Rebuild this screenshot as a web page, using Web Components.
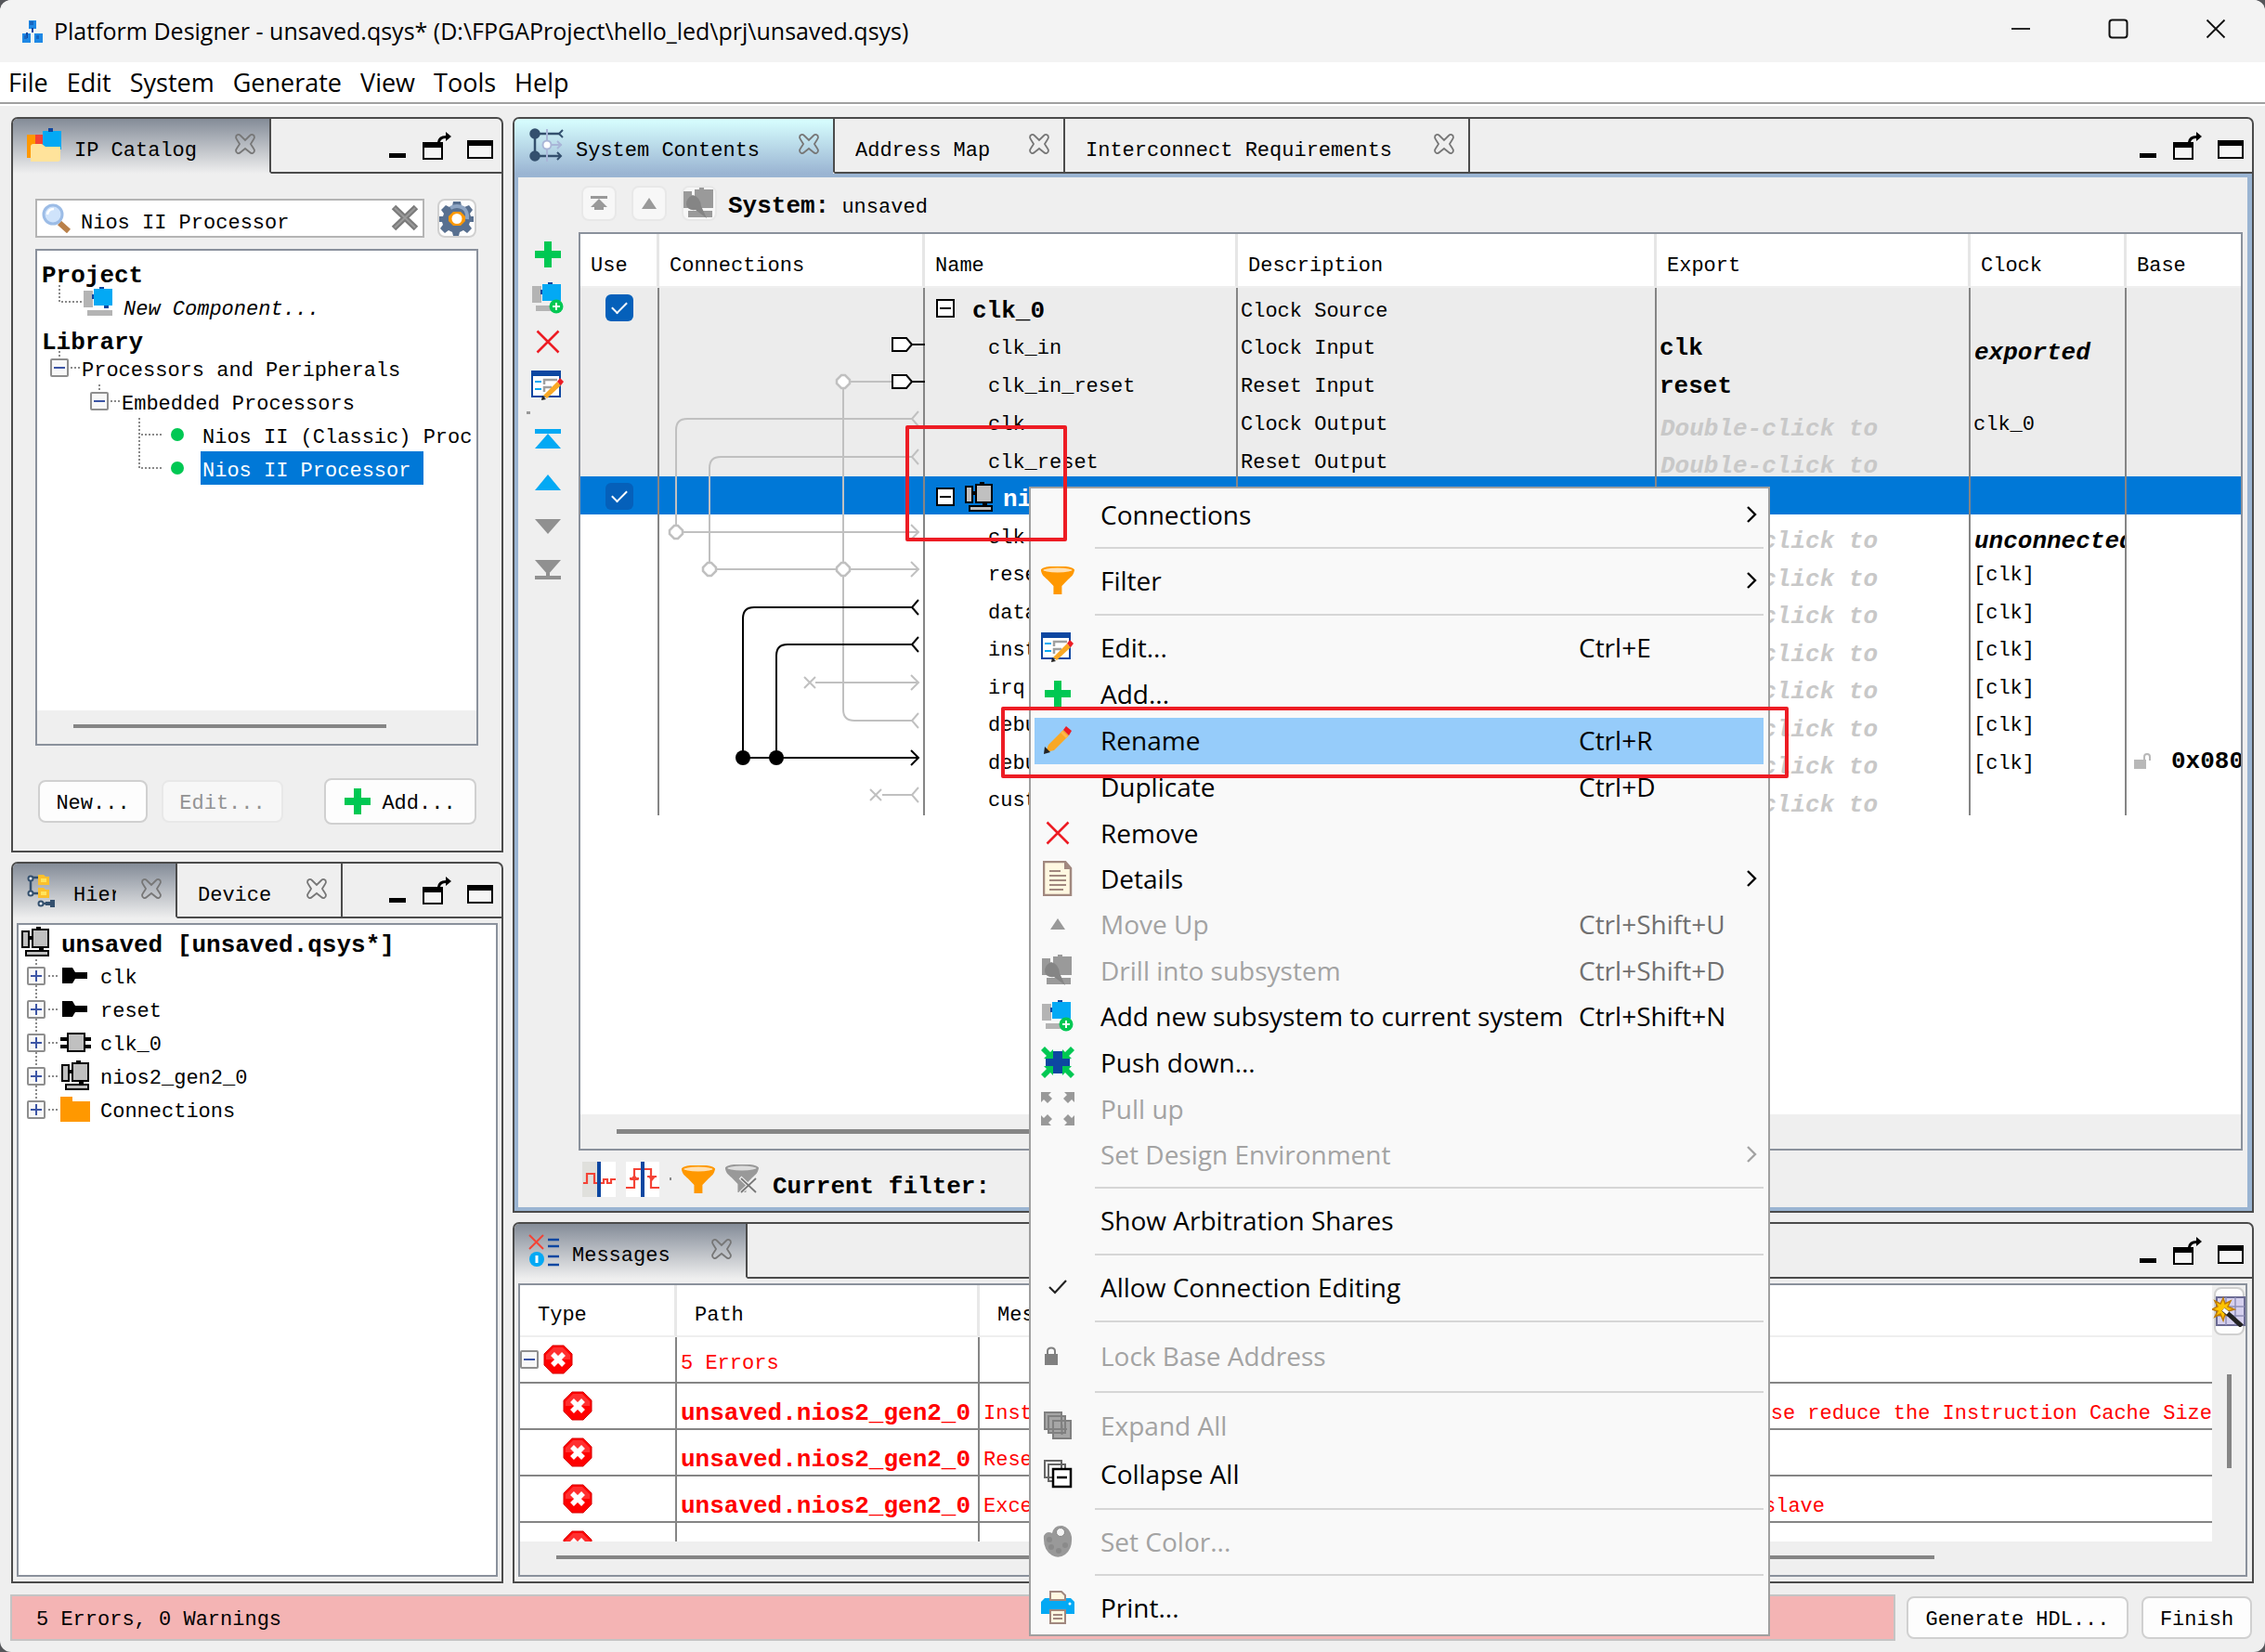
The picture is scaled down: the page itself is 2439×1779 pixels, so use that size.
<!DOCTYPE html>
<html lang="en">
<head>
<meta charset="utf-8">
<title>Platform Designer</title>
<style>
  html, body { margin: 0; height: 100%; }
  body {
    background: #55565a; overflow: hidden; color: #000;
    --mono: "Liberation Mono", "DejaVu Sans Mono", monospace;
    --ui: "Open Sans", "Noto Sans", sans-serif;
    --line: #4b4b4b; --frame: #8a919c; --face: #efefef; --sel: #0078d7;
    font: 22px/28px var(--mono);
  }
  .window { position: relative; height: 100vh; display: flex; flex-direction: column; background: var(--face); border-radius: 12px; overflow: hidden; }
  main { flex: 1; min-height: 0; display: flex; gap: 10px; padding: 12px; }
  .col { display: flex; flex-direction: column; gap: 10px; min-width: 0; }
  .left { flex: 0 0 530px; }
  .right { flex: 1; }
  .catalog { flex: 0 0 792px; }
  .messages { flex: 0 0 389px; }
  .grow { flex: 1; min-height: 0; }
  qs-context-menu { position: absolute; left: 1108px; top: 524px; }
  .mark { position: absolute; box-sizing: border-box; border: 4px solid #ed1c24; border-radius: 2px; pointer-events: none; }
  .mark-node { left: 975px; top: 458px; width: 174px; height: 125px; }
  .mark-rename { left: 1078px; top: 761px; width: 848px; height: 77px; }
</style>
</head>
<body>
<div class="window">
  <qs-title-bar>Platform Designer - unsaved.qsys* (D:\FPGAProject\hello_led\prj\unsaved.qsys)</qs-title-bar>
  <qs-menu-bar></qs-menu-bar>
  <main>
    <div class="col left">
      <qs-panel class="catalog">
        <qs-tab slot="tabs" active icon="catalog" style="--w:278px">IP Catalog</qs-tab>
        <qs-catalog></qs-catalog>
      </qs-panel>
      <qs-panel class="grow">
        <qs-tab slot="tabs" active icon="hier" style="--w:177px;--tw:46px">Hierarchy</qs-tab>
        <qs-tab slot="tabs" style="--w:178px">Device</qs-tab>
        <qs-hierarchy></qs-hierarchy>
      </qs-panel>
    </div>
    <div class="col right">
      <qs-panel class="grow" focused>
        <qs-tab slot="tabs" active focused icon="system" style="--w:345px">System Contents</qs-tab>
        <qs-tab slot="tabs" style="--w:248px">Address Map</qs-tab>
        <qs-tab slot="tabs" style="--w:436px">Interconnect Requirements</qs-tab>
        <qs-system></qs-system>
      </qs-panel>
      <qs-panel class="messages">
        <qs-tab slot="tabs" active icon="messages" style="--w:251px">Messages</qs-tab>
        <qs-messages></qs-messages>
      </qs-panel>
    </div>
  </main>
  <qs-status-bar>5 Errors, 0 Warnings</qs-status-bar>
  <qs-context-menu></qs-context-menu>
  <div class="mark mark-node"></div>
  <div class="mark mark-rename"></div>
</div>

<script>
const define = (name, css, html) => {
  const t = document.createElement('template');
  customElements.define(name, class extends HTMLElement {
    connectedCallback() {
      if (this.shadowRoot) return;
      t.innerHTML = `<style>:host,*{box-sizing:border-box}button,input{font:inherit;color:inherit;margin:0}${css}</style>` +
        (typeof html === 'function' ? html(this) : html);
      this.attachShadow({ mode: 'open' }).append(t.content.cloneNode(true));
    }
  });
};

/* ---------- icons ---------- */
const computer = (line, side, main) =>
  `<g stroke="${line}" stroke-width="2"><path d="M17 0h5v4h-5zM8 10h6v4h-6zM20 22h5v5h-5z" fill="${line}" stroke="none"/><rect x="2" y="5" width="7" height="17" fill="${side}"/><rect x="13" y="3" width="17" height="19" fill="${main}"/><rect x="6" y="26" width="24" height="5" fill="${side}"/></g>`;
const blueComputer = '<path d="M0 4h10v18H0zM4 25h27v6H4z" fill="#b4b4b4"/><path d="M9 8h5v5H9zM17 0h5v4h-5zM22 20h5v3h-5z" fill="#0d47a1"/><path d="M11 2h20v18H11z" fill="#03a9f4"/>';
const funnel = (c, hi) => `<path d="M0 3h32c0 6-3 8-6 11l-6 7v9h-8v-9L6 14C3 11 0 9 0 3z" fill="${c}"/><ellipse cx="16" cy="4" rx="15" ry="3.5" fill="${hi}" stroke="${c}" stroke-width="2"/>`;
const pencil = '<path d="M3 29l3-8L22 5l6 6L12 27z" fill="#f9a825"/><path d="M22 5l3-4 6 5-3 5z" fill="#ed1c24"/><path d="M21 6l6 6-2 2-6-6z" fill="#ffb74d"/><path d="M1 31l1-8 6 6z" fill="#222"/>';
const edit = '<path d="M0 1h32v29H0z" fill="#0d47a1"/><path d="M2 7h28v21H2z" fill="#fff"/><path d="M4 12h7v2H4zM4 20h7v2H4z" fill="#03a9f4"/><path d="M14 16v-5h14M14 24v-5h8" fill="none" stroke="#a0a0a0" stroke-width="2.5"/><path d="M13 28L28 13l4 4-15 14z" fill="#f9a825"/><path d="M28 13l3-4 4 4-3 4z" fill="#ed1c24"/><path d="M11 33l1-5 4 4z" fill="#222"/>';
const arrow = (x, y, r) => `<path transform="translate(${x} ${y}) rotate(${r})" d="M0 0h11l-3 3 4 4-5 5-4-4-3 3z"/>`;
const err = '<path d="M10 1h12l9 9v12l-9 9H10l-9-9V10z" fill="#f00" stroke="#d80000"/><path d="M11 3h10l8 8v5H3v-5z" fill="#ff5555" opacity=".55"/><path d="M10 10l12 12M22 10L10 22" stroke="#fff" stroke-width="5.5"/>';
const box = (sign) => `<rect x="1" y="1" width="18" height="18" rx="1" fill="#f8f8f8" stroke="#8e8e8e" stroke-width="2"/><path d="M4 10h12${sign === '+' ? 'M10 4v12' : ''}" stroke="#3c55a5" stroke-width="2"/>`;
const wbox = '<rect x="1" y="1" width="18" height="18" fill="#fff" stroke="#000" stroke-width="2"/><path d="M4 10h12" stroke="#000" stroke-width="2"/>';
const ICONS = {
  logo: [24, 26, '<path d="M8 1h8v9H8zM1 15h9v10H1zM14 15h9v10h-9z" fill="#1e88e5"/><path d="M12 9v5M6 20v-6" stroke="#0d47a1" stroke-width="2"/><path d="M9 2h4v4H9zM3 17h3v4H3zM16 17h3v4h-3z" fill="#1565c0"/>'],
  wmin: [22, 22, '<path d="M1 11h20" stroke="#111" stroke-width="1.8"/>'],
  wmax: [22, 22, '<rect x="1.5" y="1.5" width="19" height="19" rx="3" fill="none" stroke="#111" stroke-width="2"/>'],
  wclose: [22, 22, '<path d="M1.500 1.500l19 19M20.500 1.500l-19 19" stroke="#111" stroke-width="1.800"/>'],
  catalog: [38, 38, '<path d="M0 7h16v25H0z" fill="#ff9800"/><path d="M9 7h8v12H9z" fill="#f44336"/><path d="M17 3h20v20H17z" fill="#03a9f4"/><path d="M23 0h5v4h-5z" fill="#0d47a1"/><path d="M4 36V20q0-3 3-3h9l4 3h16v13q0 3-3 3z" fill="#ffe39b"/>'],
  hier: [32, 36, '<path d="M4 5v16M4 4h8M4 21h8M16 32h8" stroke="#34506e" stroke-width="2.500"/><g fill="#f3f7fb" stroke="#34506e" stroke-width="2"><circle cx="4" cy="5" r="2.500"/><circle cx="4" cy="21" r="2.500"/><circle cx="15" cy="32" r="2.500"/></g><path d="M12 1h6l2 2h4v9H12zM12 15h6l2 2h4v9H12z" fill="#fbc02d"/><path d="M15 5h6v4h-6zM15 19h6v4h-6z" fill="#ffe45c"/><path d="M20 30h5v-2h5v8h-5v-2h-5z" fill="#34506e"/>'],
  system: [38, 38, '<g stroke="#34506e" stroke-width="2.500" fill="#34506e"><path d="M7 6v24M7 6h27M7 30h27" fill="none"/><circle cx="7" cy="6" r="4.500"/><circle cx="7" cy="30" r="4.500"/><path d="M37 2l-4 4 4 4M31 26l4 4-4 4" fill="none" stroke-width="2"/></g><path d="M20 1v35M20 18h16M31 14l4 4-4 4" stroke="#a9b6d8" stroke-width="2" fill="none"/><circle cx="20" cy="18" r="4.500" fill="#fff" stroke="#a9b6d8" stroke-width="2"/>'],
  messages: [34, 36, '<path d="M1 1l15 15M16 1L1 16" stroke="#f44336" stroke-width="2"/><circle cx="9" cy="27" r="8" fill="#03a9f4"/><path d="M9 23v8" stroke="#fff" stroke-width="3"/><path d="M21 6h12M21 13h12M21 24h12M21 33h12" stroke="#0d47a1" stroke-width="2.500"/>'],
  close: [24, 24, '<path d="M2 5c0-3 3-4 5-2l5 5 5-5c2-2 5-1 5 2 0 1-1 2-4 7 3 5 4 6 4 7 0 3-3 4-5 2l-5-4-5 4c-2 2-5 1-5-2 0-1 1-2 4-7C3 7 2 6 2 5z" fill="none" stroke="#777" stroke-width="1.800"/>'],
  pmin: [20, 24, '<path d="M1 17h18v5H1z"/>'],
  pfloat: [32, 30, '<path d="M2 12h20v17H2z" fill="#f5f5f5" stroke="#000" stroke-width="2"/><path d="M1 11h22v6H1zM17 11q1-7 9-7V0l6 5-6 5V7q-5 0-6 4z"/>'],
  pmax: [30, 22, '<path d="M2 2h26v18H2z" fill="#f5f5f5" stroke="#000" stroke-width="2"/><path d="M1 1h28v6H1z"/>'],
  search: [32, 32, '<path d="M19 21l10 9" stroke="#b9804a" stroke-width="6"/><circle cx="12" cy="12" r="10" fill="#cfe3fb" stroke="#9cbce6" stroke-width="3"/><path d="M6 12q1-6 7-6" stroke="#fff" stroke-width="2.500" fill="none"/>'],
  clear: [32, 30, '<path d="M4 3l24 23M28 3L4 26" stroke="#7b7b7b" stroke-width="6.500"/><path d="M5 4l22 21M27 4L5 25" stroke="#9a9a9a" stroke-width="2"/>'],
  gear: [38, 38, '<path d="M15 1h8l1 5 3 1 5-2 4 5-3 4 1 3h3v6h-4l-1 3 3 4-5 5-4-3-4 2-1 4h-6l-1-4-4-2-4 3-5-5 3-4-1-3H0v-6h4l1-3-3-4 5-5 4 2 3-1z" fill="#587090"/><path d="M12 8q7-4 14 0 5 4 4 12" stroke="#8ea5c3" stroke-width="4" fill="none"/><path d="M15 12h8l5 5v5l-5 5h-8l-5-5v-5z" fill="#ff9800"/><circle cx="19" cy="19.500" r="5.500" fill="#fff"/>'],
  plus: [28, 28, '<path d="M10 0h8v10h10v8H18v10h-8V18H0v-8h10z" fill="#00c853"/>'],
  newsub: [34, 34, blueComputer + '<circle cx="26" cy="26" r="7.500" fill="#00c853"/><path d="M26 22v8M22 26h8" stroke="#fff" stroke-width="2"/>'],
  bluecomp: [32, 32, blueComputer],
  drill: [34, 34, '<path d="M0 4h9v18H0zM12 2h20v20H12zM17 0h5v3h-5zM5 25h26v7H5z" fill="#9a9a9a"/><path d="M10 8q8 2 9 12l6 13-12-9Q4 25 3 18q0-7 7-10z" fill="#858585"/>'],
  remove: [26, 26, '<path d="M1.500 1.500l23 23M24.500 1.500l-23 23" stroke="#ed1c24" stroke-width="2.500"/>'],
  edit: [36, 34, edit],
  rename: [32, 32, pencil],
  top: [28, 22, '<path d="M0 0h28v5H0zM14 5l14 16H0z" fill="#03a9f4"/>'],
  up: [28, 17, '<path d="M14 0l14 17H0z" fill="#03a9f4"/>'],
  down: [28, 16, '<path d="M0 0h28L14 16z" fill="#909090"/>'],
  bottom: [28, 22, '<path d="M0 0h28L14 16zM0 17h28v4H0z" fill="#909090"/><path d="M12 14h4v4h-4z" fill="#909090"/>'],
  gtop: [18, 16, '<path d="M0 0h18v3H0zM9 3l9 9H0zM4 10h10v5H4z" fill="#999"/>'],
  gup: [16, 12, '<path d="M8 0l8 12H0z" fill="#999"/>'],
  wave1: [36, 38, '<path d="M0 0h18v38H0z" fill="#e0e0dc"/><path d="M18 0h18v38H18z" fill="#fff"/><path d="M1 23h4V13h8v10h10v-4h4v4h4v-4h5" fill="none" stroke="#f44336" stroke-width="2.200"/><path d="M16 0h4v38h-4z" fill="#0d47a1"/>'],
  wave2: [36, 38, '<path d="M0 0h36v38H0z" fill="#fff"/><path d="M0 28h9V8h18v20h9M4 18h10M23 16h10" fill="none" stroke="#f44336" stroke-width="2.200"/><path d="M9 14l5 6H4zM28 21l5-6H23z" fill="#f44336"/><path d="M16 0h4v38h-4z" fill="#0d47a1"/>'],
  funnel: [36, 30, `<g transform="scale(1.120 1)">${funnel('#ff9800', '#ffe0b2')}</g>`],
  gfunnel: [36, 32, `<g transform="scale(1.120 1)">${funnel('#999', '#ddd')}</g><path d="M16 14l18 17M34 14L16 31" stroke="#efefef" stroke-width="4"/><path d="M17 15l16 15M33 15L17 30" stroke="#777" stroke-width="1.800"/>`],
  details: [32, 38, '<path d="M1 1h23l6 7v29H1z" fill="#fff8e1" stroke="#a1887f" stroke-width="2.500"/><path d="M23 1v8h7" fill="#a1887f"/><path d="M7 11h12M7 16h18M7 21h18M7 26h18M7 31h15" stroke="#a1887f" stroke-width="2"/>'],
  push: [36, 34, `<path d="M13 5h10v7h8v10h-8v7H13v-7H5V12h8z" fill="#0d47a1"/><g fill="#00c853"><path d="M13 13H3l3-3-6-6 4-4 6 6 3-3zM23 13h10l-3-3 6-6-4-4-6 6-3-3zM13 21H3l3 3-6 6 4 4 6-6 3 3zM23 21h10l-3 3 6 6-4 4-6-6-3 3z"/></g>`],
  pull: [36, 36, `<g fill="#999">${arrow(0, 0, 0)}${arrow(36, 0, 90)}${arrow(36, 36, 180)}${arrow(0, 36, 270)}</g>`],
  check: [20, 18, '<path d="M1 9l6 6L19 2" fill="none" stroke="#222" stroke-width="2.200"/>'],
  lock: [28, 20, '<path d="M0 8h14v12H0z" fill="#808080"/><path d="M3 9V5q0-3.500 4-3.500T11 5v4" fill="none" stroke="#808080" stroke-width="2"/>'],
  unlock: [20, 18, '<path d="M0 7h13v10H0z" fill="#b8b8b8"/><path d="M11 8V4q0-3 3-3t3 3v4" fill="none" stroke="#b8b8b8" stroke-width="2"/>'],
  expand: [32, 32, '<g fill="#a6a6a6" stroke="#808080" stroke-width="2"><path d="M2 2h18v18H2zM6 6h18v18H6zM11 11h19v19H11z"/><path d="M15 20h11M20.500 15v11"/></g>'],
  collapse: [32, 32, '<g fill="#fff" stroke="#666" stroke-width="2"><path d="M2 2h18v18H2zM6 6h18v18H6z"/><path d="M11 11h19v19H11zM15 20h11" stroke="#000" stroke-width="2.500"/></g>'],
  palette: [34, 36, '<path d="M2 12q3-6 9-3Q13 0 22 1q8 2 10 12 1 13-7 19-7 5-14 1Q1 27 2 12z" fill="#999"/><circle cx="20" cy="8" r="4.500" fill="#f4f4f4" stroke="#888"/><g fill="#8a8a8a"><circle cx="8" cy="16" r="3"/><circle cx="10" cy="24" r="3"/><circle cx="18" cy="28" r="3"/><circle cx="25" cy="22" r="3"/></g>'],
  print: [36, 36, '<path d="M4 8h28l4 4v13H0V12z" fill="#03a9f4"/><path d="M10 1h12l4 4v5H10zM10 21h16v14H10z" fill="#fff8e1" stroke="#a1887f" stroke-width="2"/><path d="M13 26h10M13 30h10" stroke="#a1887f" stroke-width="2"/><circle cx="31" cy="14" r="1.500" fill="#fff"/>'],
  chev: [12, 20, '<path d="M1 2l8 8-8 8" fill="none" stroke="currentColor" stroke-width="2.400"/>'],
  err: [32, 32, err],
  minus: [20, 20, box('-')],
  wbox: [20, 20, wbox],
  comp: [32, 33, computer('#000', '#c0c0c0', '#c0c0c0')],
  wizard: [36, 34, '<path d="M5 2h30v30H5z" fill="#d5d0ee" stroke="#6a6a92" stroke-width="2"/><path d="M15 2v30M25 2v30M5 12h30M5 22h30" stroke="#8f8fb8" stroke-width="1.500"/><path d="M12 3l2 6 6-3-3 6 7 3-7 2 3 6-6-3-2 7-3-7-6 3 3-6-6-2 6-3-3-6 6 3z" fill="#ffc400" stroke="#c07c00" stroke-width="1.500"/><path d="M12 15l20 18" stroke="#222" stroke-width="5"/><path d="M12 15l5 4" stroke="#fff" stroke-width="4"/>']
};
define('qs-icon', ':host{display:inline-flex;flex:none}svg{display:block}', el => {
  const [w, h, body] = ICONS[el.getAttribute('name')];
  return `<svg width="${w}" height="${h}" viewBox="0 0 ${w} ${h}" aria-hidden="true">${body}</svg>`;
});
const icon = n => `<qs-icon name="${n}"></qs-icon>`;

/* ---------- window chrome ---------- */
define('qs-title-bar', `
  :host{display:flex;align-items:center;height:67px;flex:none;background:#f3f3f3;padding:0 42px 0 23px;gap:11px;font:25px/34px var(--ui)}
  .t{flex:1;white-space:nowrap;padding-bottom:1px}
  .b{display:flex;gap:83px;padding-bottom:5px}
  button{border:0;background:none;padding:0;display:flex}`,
  `${icon('logo')}<span class="t"><slot></slot></span><span class="b"><button aria-label="Minimize">${icon('wmin')}</button><button aria-label="Maximize">${icon('wmax')}</button><button aria-label="Close">${icon('wclose')}</button></span>`);

define('qs-menu-bar', `
  :host{display:block;flex:none;background:#fff;font:27px/43px var(--ui);border-bottom:2px solid #fff}
  nav{display:flex;gap:20px;padding:0 9px;height:45px;border-bottom:2px solid #a0a0a0}
  button{border:0;background:none;padding:0}`,
  `<nav>${['File', 'Edit', 'System', 'Generate', 'View', 'Tools', 'Help'].map(m => `<button>${m}</button>`).join('')}</nav>`);

define('qs-panel', `
  :host{display:flex;flex-direction:column;border:2px solid var(--line);border-radius:7px 7px 0 0;background:var(--face);min-height:0;overflow:hidden}
  .strip{display:flex;height:59px;flex:none}
  .rest{flex:1;display:flex;justify-content:flex-end;align-items:flex-end;gap:16px;padding:0 8px 13px 0;border-bottom:2px solid var(--line)}
  .rest button{border:0;background:none;padding:0;display:flex}
  .body{flex:1;min-height:0;display:flex;padding:0 4px 4px}
  .body.f{border:solid #9ab4d2;border-width:4px 5px 4px 4px;padding:0}
  ::slotted(:not([slot])){flex:1;min-width:0}`,
  el => `<div class="strip"><slot name="tabs"></slot><div class="rest"><button aria-label="Minimize panel">${icon('pmin')}</button><button aria-label="Detach panel">${icon('pfloat')}</button><button aria-label="Maximize panel">${icon('pmax')}</button></div></div><div class="body ${el.hasAttribute('focused') ? 'f' : ''}"><slot></slot></div>`);

define('qs-tab', `
  :host{display:flex;align-items:center;width:var(--w);flex:none;border-right:2px solid var(--line);border-bottom:2px solid var(--line);padding:0 14px 0 22px;gap:13px;white-space:nowrap}
  :host([active]){border-bottom-color:transparent;background:linear-gradient(#848c98,#efefef) border-box;padding-left:15px}
  :host([focused]){background:linear-gradient(#d8ffff,#9ab4d2) border-box}
  span{flex:1;overflow:hidden;padding-top:12px;line-height:28px}
  :host([style*="--tw"]) span{flex:0 0 var(--tw);margin-left:5px}
  button{border:0;background:none;padding:0;display:flex;margin-left:auto;padding-bottom:3px}`,
  el => `${el.hasAttribute('icon') ? icon(el.getAttribute('icon')) : ''}<span><slot></slot></span><button aria-label="Close tab">${icon('close')}</button>`);

define('qs-button', `
  :host{display:inline-flex}
  button{display:flex;align-items:center;justify-content:center;gap:12px;width:100%;height:100%;padding:6px 0 0;background:#fdfdfd;border:2px solid #d0d0d0;border-radius:8px;white-space:nowrap}
  button:disabled{background:#f7f7f7;border-color:#e8e8e8;color:#939393}
  qs-icon{margin-top:-6px}`,
  el => `<button ${el.hasAttribute('disabled') ? 'disabled' : ''} ${el.hasAttribute('label') ? `aria-label="${el.getAttribute('label')}"` : ''}>${el.hasAttribute('icon') ? icon(el.getAttribute('icon')) : ''}<slot></slot></button>`);

/* ---------- IP catalog ---------- */
const dots = d => `<path d="${d}" fill="none" stroke="#8a8a8a" stroke-width="2" stroke-dasharray="2 2"/>`;
const guide = (x, w, body) => `<svg width="${w}" height="36" viewBox="${x} 0 ${w} 36" aria-hidden="true">${body}</svg>`;
const at = (x, y, body) => `<g transform="translate(${x} ${y})">${body}</g>`;

define('qs-catalog', `
  :host{display:flex;flex-direction:column;padding:27px 21px 24px 20px}
  .find{display:flex;gap:14px;height:42px;margin-right:2px}
  label{flex:1;display:flex;align-items:center;gap:8px;background:#fff;border:2px solid #b4b4b4;padding:0 3px 0 5px;min-width:0}
  input{flex:1;min-width:0;border:0;outline:0;background:none;padding:10px 0 0 2px;height:38px}
  label button{border:0;background:none;padding:0;display:flex}
  .find>button{width:42px;padding:0;border:2px solid #d0d0d0;border-radius:8px;background:#fdfdfd;display:flex;align-items:center;justify-content:center}
  .box{margin-top:12px;flex:1;min-height:0;display:flex;flex-direction:column;border:2px solid var(--frame);background:#fff;overflow:hidden}
  .tree{flex:1;overflow:hidden}
  .r{display:flex;height:36px;padding-left:5px;align-items:center;white-space:pre}
  .r span{padding-top:8px;line-height:28px}
  .low span{padding-top:20px;line-height:16px}
  b{font-size:26px} svg{flex:none;display:block}
  .sel span{background:var(--sel);color:#fff;padding:8px 14px 0 2px;margin-left:-2px}
  .sb{height:36px;background:var(--face);padding:15px 97px 0 39px}
  .sb i{display:block;height:4px;background:#858585}
  .btns{display:flex;align-items:center;gap:15px;margin:35px 2px 0 3px}
  .btns qs-button{height:46px;width:118px} .btns .e{width:131px} .btns .a{width:164px;height:50px;margin-left:auto}`,
  `<div class="find"><label>${icon('search')}<input aria-label="Search IP" value="Nios II Processor"><button aria-label="Clear">${icon('clear')}</button></label><button aria-label="Settings">${icon('gear')}</button></div>
  <div class="box"><div class="tree">
    <div class="r low"><span><b>Project</b></span></div>
    <div class="r low">${guide(45, 88, dots('M64 1V19H88') + at(90, 3, blueComputer))}<span><i>New Component...</i></span></div>
    <div class="r low"><span><b>Library</b></span></div>
    <div class="r">${guide(45, 43, dots('M64 0V8M76 18H88') + at(54, 8, box('-')))}<span>Processors and Peripherals</span></div>
    <div class="r">${guide(45, 86, dots('M107 0V8M119 18H131') + at(97, 8, box('-')))}<span>Embedded Processors</span></div>
    <div class="r">${guide(45, 173, dots('M150 0V36M152 18H175') + '<circle cx="191" cy="18" r="7" fill="#00c853"/>')}<span>Nios II (Classic) Proc</span></div>
    <div class="r sel">${guide(45, 173, dots('M150 0V18H175') + '<circle cx="191" cy="18" r="7" fill="#00c853"/>')}<span>Nios II Processor</span></div>
  </div><div class="sb"><i></i></div></div>
  <div class="btns"><qs-button>New...</qs-button><qs-button class="e" disabled>Edit...</qs-button><qs-button class="a" icon="plus">Add...</qs-button></div>`);

/* ---------- hierarchy ---------- */
const port = '<path d="M0 0h11l3 5h13v7H14l-3 5H0z" fill="#000"/>';
const chip = '<path d="M0 5h33v4H0zM0 13h33v4H0z" fill="#000"/><rect x="8" y="1" width="18" height="19" fill="#c0c0c0" stroke="#000" stroke-width="2"/>';
const folder = '<path d="M0 0h13v5h19v22H0z" fill="#ff9800"/>';
const hrow = (text, art, last) => `<div class="r">${guide(20, 88, dots(`M39 0V8${last ? '' : 'M39 28V36'}M52 18H64`) + at(29, 8, box('+')) + art)}<span>${text}</span></div>`;
define('qs-hierarchy', `
  :host{display:block;margin:5px 0 1px;border:2px solid var(--frame);background:#fff;padding-top:1px}
  .r{display:flex;height:36px;align-items:center;white-space:pre}
  .r span{padding-top:5px}
  .root span{padding-top:8px}
  b{font-size:26px} svg{flex:none;display:block}`,
  `<div class="r root">${guide(20, 46, at(22, 1, computer('#000', '#c0c0c0', '#c0c0c0')))}<span><b>unsaved [unsaved.qsys*]</b></span></div>` +
  hrow('clk', at(67, 9, port)) + hrow('reset', at(67, 9, port)) + hrow('clk_0', at(65, 7, chip)) +
  hrow('nios2_gen2_0', at(65, 1, computer('#000', '#c0c0c0', '#c0c0c0'))) + hrow('Connections', at(65, 4, folder), true));

/* ---------- system contents ---------- */
const fork = (y, c) => `<path d="M989 ${y - 8}l-7 8 7 8" fill="none" stroke="${c}" stroke-width="2"/>`;
const head = (y, c) => `<path d="M981 ${y - 8}l8 8-8 8" fill="none" stroke="${c}" stroke-width="2"/>`;
const node = (x, y) => `<path d="M${x - 2} ${y - 7}h4l5 5v4l-5 5h-4l-5-5v-4z" fill="#fff" stroke="#c0c0c0" stroke-width="2.500"/>`;
const pin = y => `<path d="M961 ${y - 7}h15l6 7-6 7h-15z" fill="#fff" stroke="#000" stroke-width="2"/><path d="M982 ${y}h14" stroke="#000" stroke-width="2"/>`;
const cross = (x, y) => `<path d="M${x - 6} ${y - 6}l12 12M${x + 6} ${y - 6}l-12 12" stroke="#c0c0c0" stroke-width="2"/>`;
const G = '#c0c0c0', K = '#000';
const wires = `<svg width="286" height="567" viewBox="710 309 286 567" aria-hidden="true">
  <g fill="none" stroke="${G}" stroke-width="2"><path d="M982 450H740q-12 0-12 12V572H989M982 491H776q-12 0-12 12V612H989M961 410H908V763q0 12 12 12H982M878 734H989M950 855H982"/></g>
  <g fill="none" stroke="${K}" stroke-width="2"><path d="M982 653H812q-12 0-12 12V815H989M982 693H848q-12 0-12 12V815"/></g>
  ${fork(450, G)}${fork(491, G)}${head(572, G)}${head(612, G)}${fork(653, K)}${fork(693, K)}${head(734, G)}${fork(775, G)}${head(815, K)}${fork(855, G)}
  ${node(908, 410)}${node(728, 572)}${node(764, 612)}${node(908, 612)}${pin(370)}${pin(410)}${cross(872, 734)}${cross(943, 855)}
  <circle cx="800" cy="815" r="8"/><circle cx="836" cy="815" r="8"/></svg>`;
const dbl = '<td class="low"><b class="hint"><i>Double-click to</i></b></td>';
const child = (name, desc, exp, clock, base) => `<td></td><td></td><td class="kid">${name}</td><td>${desc}</td>${exp}<td ${/<i>/.test(clock) ? 'class="low"' : ''}>${clock}</td><td>${base || ''}</td>`;
const ROWS = [
  ['g', `<td class="use"><input type="checkbox" checked aria-label="Use clk_0"></td><td class="conn">${wires}</td><td class="top"><span>${icon('wbox')}<b class="n0">clk_0</b></span></td><td>Clock Source</td><td></td><td></td><td></td>`],
  ['g', child('clk_in', 'Clock Input', '<td><b>clk</b></td>', '<b><i>exported</i></b>')],
  ['g', child('clk_in_reset', 'Reset Input', '<td><b>reset</b></td>', '')],
  ['g', child('clk', 'Clock Output', dbl, 'clk_0')],
  ['g', child('clk_reset', 'Reset Output', dbl, '')],
  ['s', `<td class="use"><input type="checkbox" checked aria-label="Use nios2_gen2_0"></td><td></td><td class="top"><span>${icon('wbox')}${icon('comp')}<b>nios2_gen2_0</b></span></td><td></td><td></td><td></td><td></td>`],
  ['', child('clk', '', dbl, '<b><i>unconnected</i></b>')],
  ['', child('reset', '', dbl, '[clk]')],
  ['', child('data_master', '', dbl, '[clk]')],
  ['', child('instruction', '', dbl, '[clk]')],
  ['', child('irq', '', dbl, '[clk]')],
  ['', child('debug_reset', '', dbl, '[clk]')],
  ['', child('debug_mem', '', dbl, '[clk]', `<span class="base">${icon('unlock')}<b>0x080</b></span>`)],
  ['', child('custom', '', dbl, '')]
];
define('qs-system', `
  :host{display:flex;flex-direction:column;background:var(--face)}
  .bar{display:flex;align-items:center;gap:16px;height:59px;padding:0 0 3px 68px;flex:none}
  .bar qs-button{width:38px;height:38px} .bar b{font-size:26px} .bar p{margin:0 0 0 -4px;padding-top:7px;line-height:30px;white-space:pre}
  .mid{flex:1;min-height:0;display:flex}
  .tools{width:65px;padding-right:2px;flex:none;display:flex;flex-direction:column;align-items:center}
  .tools button{border:0;background:none;padding:0;height:47px;display:flex;align-items:center;justify-content:center}
  .tools hr{width:4px;height:3px;margin:5px auto 3px 9px;border:0;background:#999}
  .grid{flex:1;min-width:0;margin-right:5px;display:flex;flex-direction:column;border:2px solid var(--frame);background:#fff;overflow:hidden}
  .view{flex:1;min-height:0;overflow:hidden}
  table{border-collapse:separate;border-spacing:0;table-layout:fixed;width:100%}
  th{height:58px;padding:13px 0 0 11px;text-align:left;font-weight:400;background:#fff;border-right:3px solid #e6e6e6;border-bottom:2px solid #efefef}
  th:last-child,td:last-child{border-right:0}
  td{height:40px;padding:11px 0 0 3px;border-right:2px solid #858585;white-space:nowrap;overflow-x:clip;line-height:28px}
  tr:nth-child(even) td{height:41px}
  .g td{background:#ececec} .s td{background:var(--sel);color:#fff}
  td b{font-size:26px}
  td.low{padding-top:20px;padding-left:4px;line-height:18px}
  .hint{color:#c8c8c8}
  td.kid{padding-left:68px}
  td.use{padding:7px 0 0;text-align:center}
  td.conn{position:relative;overflow:visible;padding:0} .conn svg{position:absolute;left:0;top:0}
  td.top{padding:3px 0 0 12px} .top span{display:flex;align-items:center;gap:10px} .top b{padding-top:6px} .n0{margin-left:9px}
  .base{display:flex;align-items:center;gap:20px;padding-left:5px;margin-top:-6px}
  input{appearance:none;width:30px;height:29px;background:#0560ba;border-radius:6px;display:inline-grid;place-items:center;vertical-align:middle;margin-top:-3px}
  input::after{content:"";width:14px;height:7px;border:solid #fff;border-width:0 0 2px 2px;transform:rotate(-45deg);margin-top:-4px}
  .sb{height:37px;flex:none;background:var(--face);padding:16px 0 0 39px} .sb i{display:block;width:1100px;height:5px;background:#858585}
  .foot{display:flex;align-items:center;height:61px;flex:none;padding-left:69px;gap:11px}
  .foot button{border:0;background:none;padding:0;display:flex}
  .foot i{width:2px;height:3px;background:#888} .foot b{font-size:26px;padding-top:17px;margin-left:4px}`,
  `<div class="bar"><qs-button disabled icon="gtop" label="Top"></qs-button><qs-button disabled icon="gup" label="Up"></qs-button><qs-button disabled icon="drill" label="Drill"></qs-button><p><b>System:</b> unsaved</p></div>
  <div class="mid"><div class="tools">${['plus', 'newsub', 'remove', 'edit', '', 'top', 'up', 'down', 'bottom'].map(n => n ? `<button aria-label="${n}">${icon(n)}</button>` : '<hr>').join('')}</div>
  <div class="grid"><div class="view"><table><colgroup><col style="width:85px"><col style="width:286px"><col style="width:337px"><col style="width:451px"><col style="width:338px"><col style="width:168px"><col></colgroup>
  <thead><tr>${['Use', 'Connections', 'Name', 'Description', 'Export', 'Clock', 'Base'].map(h => `<th>${h}</th>`).join('')}</tr></thead>
  <tbody>${ROWS.map(([c, r]) => `<tr class="${c}">${r}</tr>`).join('')}</tbody></table></div><div class="sb"><i></i></div></div></div>
  <div class="foot"><button aria-label="Clock domains">${icon('wave1')}</button><button aria-label="Reset domains">${icon('wave2')}</button><i></i><button aria-label="Filter">${icon('funnel')}</button><button aria-label="Clear filter">${icon('gfunnel')}</button><b>Current filter:</b></div>`);

/* ---------- messages ---------- */
const mrow = (l, r, end) => `<tr><td class="ic">${icon('err')}</td><td class="low"><b>unsaved.nios2_gen2_0</b></td><td class="low"><span class="m"><span>${l}</span><span${end ? ' class="end"' : ''}>${r}</span></span></td></tr>`;
define('qs-messages', `
  :host{display:flex;margin:5px 1px 1px 0;border:2px solid var(--frame);background:var(--face)}
  .a{flex:1;min-width:0;display:flex;flex-direction:column}
  .view{flex:1;min-height:0;overflow:hidden;background:#fff}
  table{border-collapse:separate;border-spacing:0;table-layout:fixed;width:100%}
  th{height:56px;padding:12px 0 0 19px;text-align:left;font-weight:400;border-right:3px solid #e8e8e8;border-bottom:2px solid #efefef}
  th:last-child,td:last-child{border-right:0}
  td{height:49px;padding:10px 0 0 4px;border:solid #858585;border-width:0 2px 2px 0;color:#f00;white-space:nowrap;overflow-x:clip}
  tr:nth-child(odd) td{height:50px}
  b{font-size:26px} td.low{padding-top:18px;line-height:28px}
  td.ic{padding:0 0 0 46px} td.root{padding:0} .root span{display:flex;align-items:center;gap:5px}
  .ic qs-icon{vertical-align:top}
  .m{display:flex;justify-content:space-between} .end{margin-right:417px}
  .sb{height:36px;padding:15px 299px 0 39px} .sb i{display:block;height:4px;background:#858585}
  .v{width:36px;display:flex;flex-direction:column;align-items:center}
  .v button{width:33px;height:52px;margin-top:2px;padding:0;background:#fdfdfd;border:2px solid #d0d0d0;border-radius:8px;display:flex;align-items:center;justify-content:center}
  .v i{width:5px;height:101px;background:#858585;margin-top:42px}`,
  `<div class="a"><div class="view"><table><colgroup><col style="width:169px"><col style="width:326px"><col></colgroup>
  <thead><tr><th>Type</th><th>Path</th><th>Message</th></tr></thead><tbody>
  <tr><td class="root"><span>${icon('minus')}${icon('err')}</span></td><td>5 Errors</td><td></td></tr>
  ${mrow('Instruction', 'Please reduce the Instruction Cache Size')}${mrow('Reset', '')}${mrow('Exception', 'slave', true)}
  <tr><td class="ic">${icon('err')}</td><td></td><td></td></tr></tbody></table></div><div class="sb"><i></i></div></div>
  <div class="v"><button aria-label="Column settings">${icon('wizard')}</button><i></i></div>`);

/* ---------- status bar ---------- */
define('qs-status-bar', `
  :host{display:flex;flex:none;align-items:center;padding:0 14px 12px 11px}
  .s{flex:1;height:50px;border:2px solid #c4c4c4;background:#f4b4b4;padding:12px 0 0 26px;line-height:28px}
  qs-button{height:46px;width:239px;margin-left:12px} .f{width:119px;margin-left:14px}`,
  '<div class="s"><slot></slot></div><qs-button>Generate HDL...</qs-button><qs-button class="f">Finish</qs-button>');

/* ---------- context menu ---------- */
const MENU = [
  ['Connections', '', '', '>', 49], 0, ['Filter', 'funnel', '', '>'], 0,
  ['Edit...', 'edit', 'Ctrl+E'], ['Add...', 'plus'], ['Rename', 'rename', 'Ctrl+R', '', 50, 'hot'], ['Duplicate', '', 'Ctrl+D'],
  ['Remove', 'remove', '', '', 49], ['Details', 'details', '', '>', 49], ['Move Up', 'gup', 'Ctrl+Shift+U', '', 50, 'off'],
  ['Drill into subsystem', 'drill', 'Ctrl+Shift+D', '', 49, 'off'], ['Add new subsystem to current system', 'newsub', 'Ctrl+Shift+N'],
  ['Push down...', 'push'], ['Pull up', 'pull', '', '', 49, 'off'], ['Set Design Environment', '', '', '>', 49, 'off'], 0,
  ['Show Arbitration Shares'], 0, ['Allow Connection Editing', 'check'], 0, ['Lock Base Address', 'lock', '', '', 54, 'off'], 0,
  ['Expand All', 'expand', '', '', 52, 'off'], ['Collapse All', 'collapse', '', '', 52], 0, ['Set Color...', 'palette', '', '', 49, 'off'], 0, ['Print...', 'print']
];
define('qs-context-menu', `
  :host{display:block;width:798px;background:#f9f9f9;border:2px solid #a0a0a0;padding:4px 5px 3px 4px;font:28px/36px var(--ui)}
  ul{list-style:none;margin:0;padding:0}
  button{width:100%;height:var(--h,50px);border:0;background:none;padding:0 6px 2px 0;display:grid;grid-template-columns:50px 21px 515px 1fr auto;align-items:center;text-align:left;white-space:nowrap}
  .i{display:flex;justify-content:center}
  .hot{background:#96ccfa}
  .off{color:#a3a3a3} .off .k{color:#707070} .n{grid-column:3}
  .sep{height:22px;padding:10px 0 0 65px} .sep::after{content:"";display:block;height:2px;background:#d6d6d6}`,
  `<ul role="menu">${MENU.map(m => m ? `<li role="none"><button role="menuitem" class="${m[5] || ''}" style="--h:${m[4] || 50}px" ${m[5] === 'off' ? 'aria-disabled="true"' : ''}><span class="i">${m[1] ? icon(m[1]) : ''}</span><span class="n">${m[0]}</span><span class="k">${m[2] || ''}</span>${m[3] ? icon('chev') : ''}</button></li>` : '<li class="sep" role="separator"></li>').join('')}</ul>`);
</script>
</body>
</html>
